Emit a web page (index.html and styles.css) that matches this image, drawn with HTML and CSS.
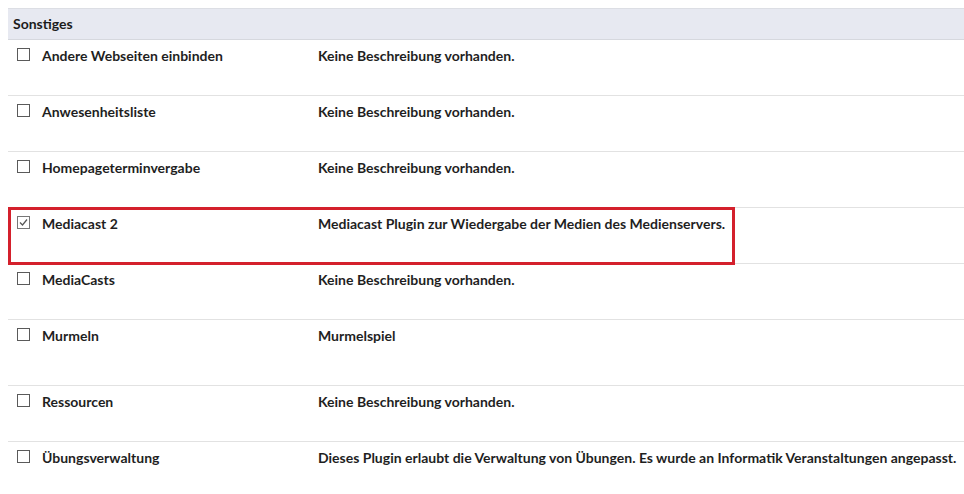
FILE: index.html
```html
<!DOCTYPE html>
<html lang="de">
<head>
<meta charset="utf-8">
<link rel="stylesheet" href="styles.css">
</head>
<body>
<div class="plugins">
  <div class="group-head">Sonstiges</div>
  <div class="row">
    <span class="box"></span>
    <span class="name">Andere Webseiten einbinden</span>
    <span class="desc">Keine Beschreibung vorhanden.</span>
  </div>
  <div class="row">
    <span class="box"></span>
    <span class="name">Anwesenheitsliste</span>
    <span class="desc">Keine Beschreibung vorhanden.</span>
  </div>
  <div class="row">
    <span class="box"></span>
    <span class="name">Homepageterminvergabe</span>
    <span class="desc">Keine Beschreibung vorhanden.</span>
  </div>
  <div class="row highlighted">
    <span class="box checked"><svg viewBox="0 0 13 13" width="13" height="13"><path d="M3 6.5 L5.5 9 L10 3.5" fill="none" stroke="#555" stroke-width="1.2"/></svg></span>
    <span class="name">Mediacast 2</span>
    <span class="desc">Mediacast Plugin zur Wiedergabe der Medien des Medienservers.</span>
    <span class="mark"></span>
  </div>
  <div class="row">
    <span class="box"></span>
    <span class="name">MediaCasts</span>
    <span class="desc">Keine Beschreibung vorhanden.</span>
  </div>
  <div class="row tall">
    <span class="box"></span>
    <span class="name">Murmeln</span>
    <span class="desc">Murmelspiel</span>
  </div>
  <div class="row">
    <span class="box"></span>
    <span class="name">Ressourcen</span>
    <span class="desc">Keine Beschreibung vorhanden.</span>
  </div>
  <div class="row last">
    <span class="box"></span>
    <span class="name">Übungsverwaltung</span>
    <span class="desc">Dieses Plugin erlaubt die Verwaltung von Übungen. Es wurde an Informatik Veranstaltungen angepasst.</span>
  </div>
</div>
</body>
</html>
```

FILE: styles.css
```css
html, body {
  margin: 0;
  background: #ffffff;
}
body {
  padding: 8px 0 0 8px;
  font-family: Lato, "Liberation Sans", sans-serif;
  font-weight: 700;
  font-size: 14px;
  color: #1f1f1f;
  overflow: hidden;
}
.plugins {
  width: 980px;
}
.group-head {
  background: #e7e9f1;
  border-top: 1px solid #dcdee4;
  border-bottom: 1px solid #d6d8de;
  height: 32px;
  box-sizing: border-box;
  padding: 6px 0 0 5px;
  line-height: 18px;
  font-size: 14px;
  color: #1c1c1c;
}
.row {
  position: relative;
  display: grid;
  grid-template-columns: 13px 276px 1fr;
  column-gap: 12px;
  align-items: start;
  height: 56px;
  box-sizing: border-box;
  padding: 6px 0 0 9px;
  border-bottom: 1px solid #e2e2e2;
  line-height: 20px;
}
.row.tall {
  height: 66px;
}
.row.last {
  border-bottom: none;
}
.row .name {
  grid-column: 2;
}
.row .desc {
  grid-column: 3;
  margin-left: -12px;
}
.box {
  width: 13px;
  height: 13px;
  margin-top: 2px;
  box-sizing: border-box;
  border: 1px solid #5a5a5a;
  background: #fff;
  position: relative;
}
.box.checked {
  border-color: #777;
}
.box svg {
  position: absolute;
  left: -1px;
  top: -1px;
}
.mark {
  position: absolute;
  left: 0;
  top: -1px;
  width: 727px;
  height: 58px;
  border: 3px solid #d4202c;
  box-sizing: border-box;
  pointer-events: none;
}
```
